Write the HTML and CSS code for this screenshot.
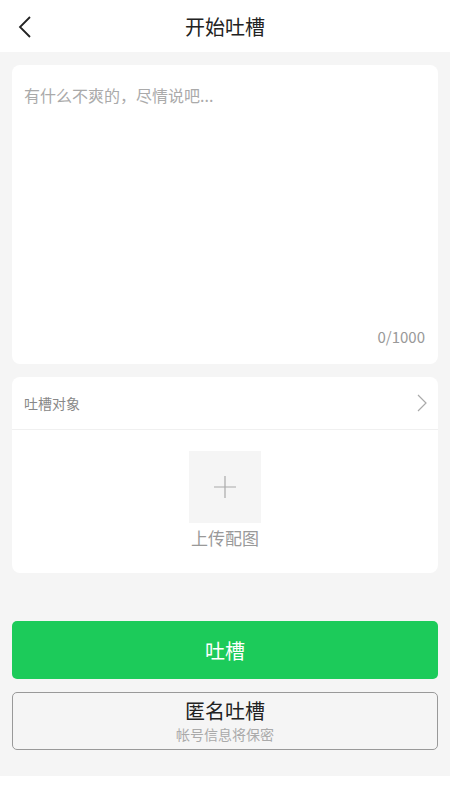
FILE: index.html
```html
<!DOCTYPE html>
<html lang="zh-CN">
<head>
	<meta charset="utf-8">
	<title>开始吐槽</title>
	<link rel="stylesheet" href="styles.css">
</head>
<body>
	<div id="header">
		<span class="back">
			<svg width="14" height="22" viewBox="0 0 14 22"><path d="M12 1 L2 11 L12 21" fill="none" stroke="#222" stroke-width="1.8"/></svg>
		</span>
		<h1>开始吐槽</h1>
	</div>
	<div id="main">
		<div class="card editor">
			<p class="placeholder">有什么不爽的，尽情说吧...</p>
			<p class="counter">0/1000</p>
		</div>
		<div class="card">
			<div class="target-row">
				<span>吐槽对象</span>
				<svg width="10" height="18" viewBox="0 0 10 18"><path d="M1 1 L9 9 L1 17" fill="none" stroke="#aaa" stroke-width="1.2"/></svg>
			</div>
			<div class="upload">
				<div class="upload-box">
					<svg width="24" height="24" viewBox="0 0 24 24"><path d="M12 1 V23 M1 12 H23" stroke="#aaa" stroke-width="1.2"/></svg>
				</div>
				<p>上传配图</p>
			</div>
		</div>
		<div class="actions">
			<button class="btn-submit">吐槽</button>
			<button class="btn-anon">
				<span class="anon-title">匿名吐槽</span>
				<span class="anon-sub">帐号信息将保密</span>
			</button>
		</div>
	</div>
</body>
</html>
```
FILE: styles.css
```css
body {
	margin: 0;
	background: #fff;
	font-family: "Noto Sans CJK SC", "Noto Sans", sans-serif;
	color: #222;
}
#header {
	height: 52px;
	display: flex;
	align-items: center;
	justify-content: center;
	position: relative;
	background: #fff;
}
#header h1 {
	margin: 0;
	font-size: 20px;
	font-weight: normal;
}
#header .back {
	position: absolute;
	left: 18px;
	top: 16px;
}
#main {
	background: #f5f5f5;
	padding: 13px 12px 26px;
}
.card {
	background: #fff;
	border-radius: 8px;
	margin-bottom: 13px;
}
.editor {
	height: 299px;
	display: flex;
	flex-direction: column;
	justify-content: space-between;
	padding: 0 13px 0 12px;
	box-sizing: border-box;
}
.editor p {
	margin: 0;
}
.placeholder {
	color: #aaa;
	font-size: 16px;
	padding-top: 18px;
}
.counter {
	text-align: right;
	color: #999;
	font-size: 15px;
	padding-bottom: 17px;
}
.target-row {
	height: 52px;
	display: flex;
	align-items: center;
	justify-content: space-between;
	padding: 0 11px 0 12px;
	border-bottom: 1px solid #f0f0f0;
	font-size: 14px;
	color: #888;
}
.upload {
	display: flex;
	flex-direction: column;
	align-items: center;
	padding: 21px 0 24px;
}
.upload-box {
	width: 72px;
	height: 72px;
	background: #f5f5f5;
	display: flex;
	align-items: center;
	justify-content: center;
}
.upload p {
	margin: 4px 0 0;
	font-size: 17px;
	color: #999;
	line-height: 22px;
}
.actions {
	padding-top: 35px;
	display: flex;
	flex-direction: column;
	gap: 13px;
}
.actions button {
	width: 100%;
	height: 58px;
	font-family: inherit;
	cursor: pointer;
}
.btn-submit {
	background: #1ccb5a;
	color: #fff;
	border: none;
	border-radius: 5px;
	font-size: 20px;
}
.btn-anon {
	background: #f5f5f5;
	border: 1.5px solid #999;
	border-radius: 5px;
	display: flex;
	flex-direction: column;
	align-items: center;
	justify-content: center;
	padding: 0;
}
.anon-title {
	font-size: 20px;
	color: #222;
	line-height: 26px;
}
.anon-sub {
	font-size: 14px;
	color: #aaa;
	line-height: 20px;
}
```
